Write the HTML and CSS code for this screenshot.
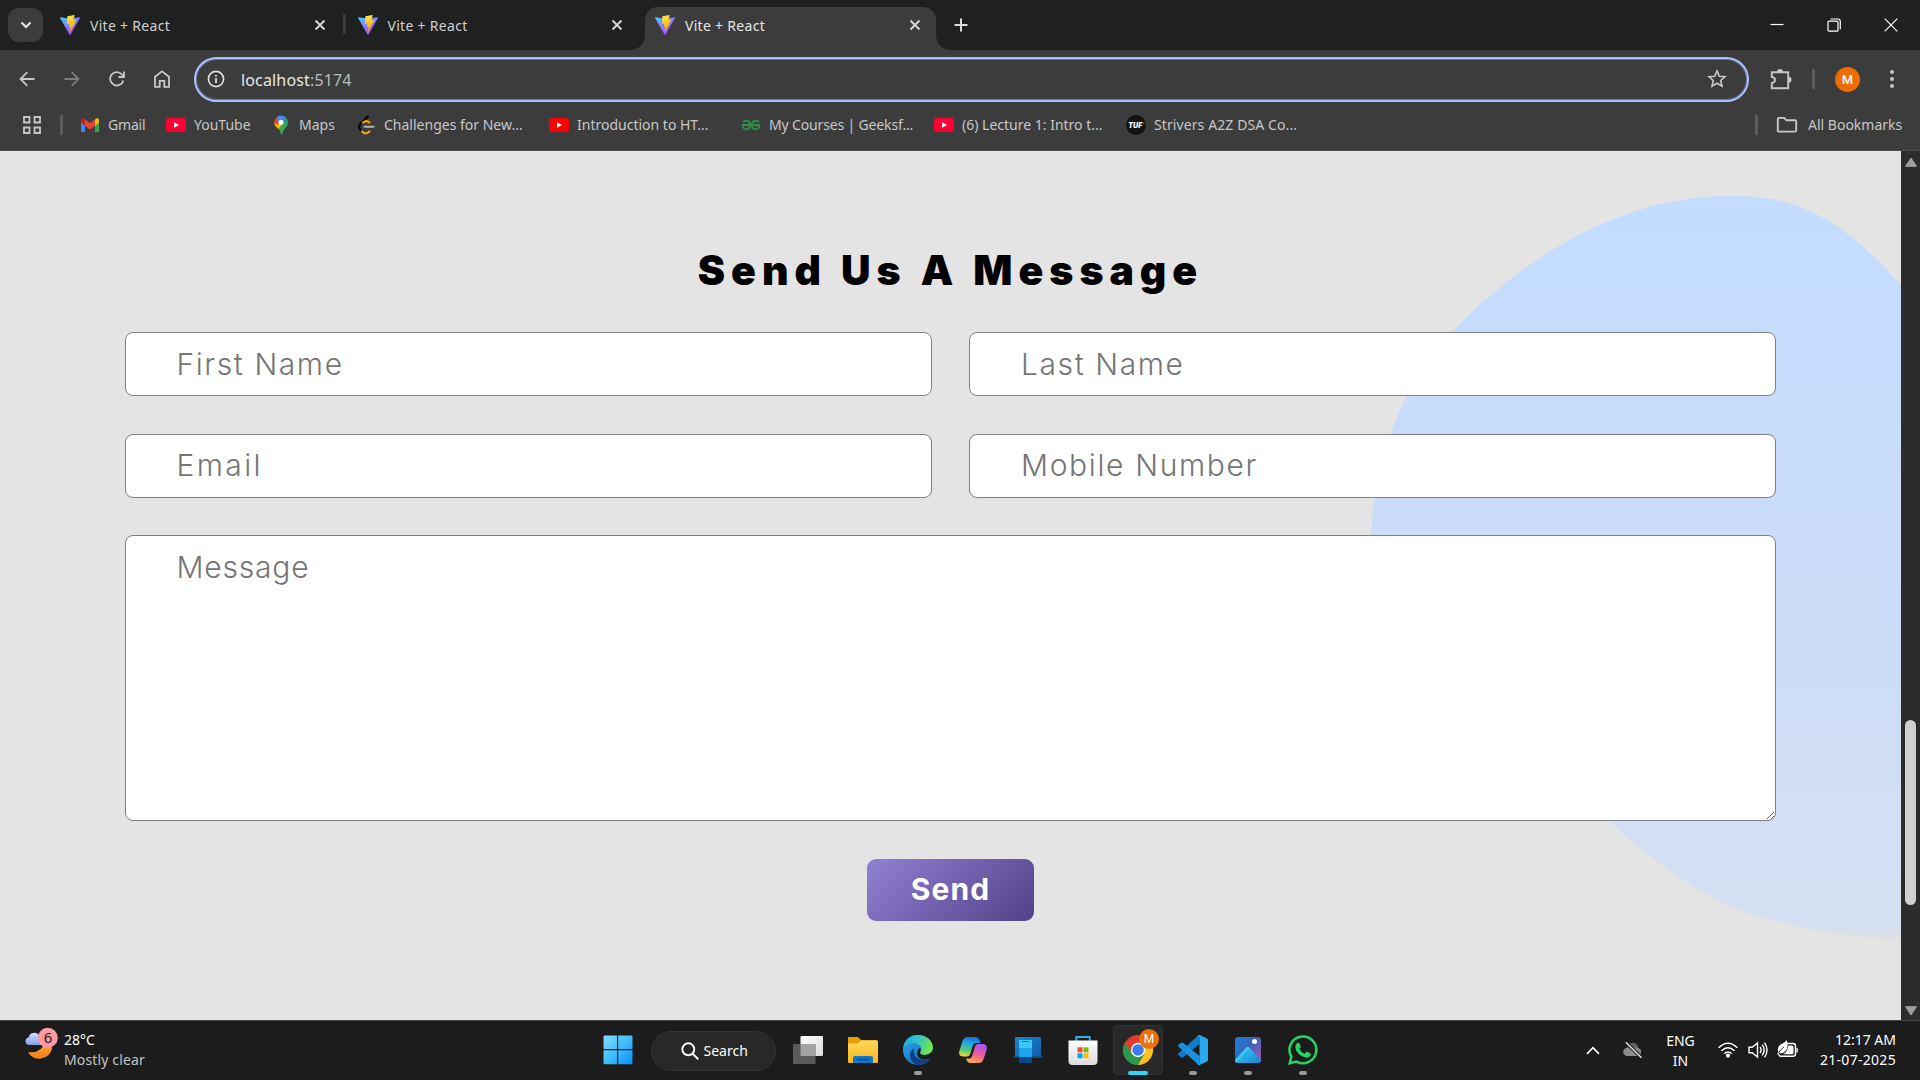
FILE: index.html
```html
<!DOCTYPE html>
<html lang="en">
<head>
<meta charset="utf-8">
<title>Vite + React</title>
<link rel="stylesheet" href="styles.css">
</head>
<body>
<svg class="defs" width="0" height="0" aria-hidden="true">
  <defs>
    <linearGradient id="va" x1="0" y1="0" x2=".7" y2="1"><stop offset="0" stop-color="#41d1ff"/><stop offset="1" stop-color="#bd34fe"/></linearGradient>
    <linearGradient id="vb" x1=".4" y1="0" x2=".6" y2="1"><stop offset="0" stop-color="#ffea83"/><stop offset=".1" stop-color="#ffdd35"/><stop offset="1" stop-color="#ffa800"/></linearGradient>
    <symbol id="vite" viewBox="0 0 256 257">
      <path fill="url(#va)" d="M255.2 37.9 134 254.600a6.600 6.600 0 0 1-11.500 0L.9 37.900a6.600 6.600 0 0 1 6.900-9.700l120 21.400a6.600 6.600 0 0 0 2.300 0l118.200-21.400a6.600 6.600 0 0 1 6.900 9.700z"/>
      <path fill="url(#vb)" d="M185.400 0 96.400 17.500a3.300 3.300 0 0 0-2.600 3l-5.500 92.500a3.300 3.300 0 0 0 4 3.400l24.800-5.700a3.300 3.300 0 0 1 4 3.900l-7.400 36a3.300 3.300 0 0 0 4.200 3.800l15.300-4.600a3.300 3.300 0 0 1 4.200 3.800l-11.700 56.600c-.7 3.500 4 5.400 6 2.400l1.300-2 72.500-144.600c1.200-2.400-.9-5.200-3.600-4.700l-25.500 5a3.300 3.300 0 0 1-3.800-4.200l16.700-57.700a3.300 3.300 0 0 0-3.800-4.200z"/>
    </symbol>
    <symbol id="yt" viewBox="0 0 20 14"><rect width="20" height="14" rx="3.200"/><path fill="#fff" d="M8 4.200v5.600L13 7z"/></symbol>
    <symbol id="close" viewBox="0 0 12 12"><path d="M1.500 1.500l9 9m0-9l-9 9" fill="none" stroke="currentColor" stroke-width="1.900"/></symbol>
  </defs>
</svg>

<header class="browser">
  <div class="tabstrip">
    <div class="tab-search"><svg width="12" height="8" viewBox="0 0 12 8"><path d="M1.500 1.500 6 6l4.500-4.500" fill="none" stroke="#e6e6e6" stroke-width="2.200"/></svg></div>
    <div class="tab"><svg class="fav"><use href="#vite"/></svg><span>Vite + React</span><svg class="x"><use href="#close"/></svg></div>
    <div class="tab second"><svg class="fav"><use href="#vite"/></svg><span>Vite + React</span><svg class="x"><use href="#close"/></svg></div>
    <div class="tab active"><svg class="fav"><use href="#vite"/></svg><span>Vite + React</span><svg class="x"><use href="#close"/></svg></div>
    <svg class="plus" width="14" height="14" viewBox="0 0 14 14"><path d="M7 .5v13M.5 7h13" stroke="#dcdcdc" stroke-width="2"/></svg>
    <div class="window-controls">
      <svg width="14" height="14"><path d="M.5 6.500h13" stroke="#fff" stroke-width="1.200"/></svg>
      <svg width="14" height="14" fill="none" stroke="#fff" stroke-width="1.200"><rect x="1" y="3.200" width="10" height="10" rx="1"/><path d="M3.500 1H11q2.300 0 2.300 2.300v8"/></svg>
      <svg width="14" height="14"><path d="M.7.700l12.600 12.600m0-12.600L.7 13.300" stroke="#fff" stroke-width="1.200"/></svg>
    </div>
  </div>

  <div class="toolbar">
    <div class="nav">
      <svg width="16" height="16" viewBox="0 0 16 16"><path d="M15.500 8H1.800M8.300 1.200 1.500 8l6.800 6.800" fill="none" stroke="#c7c7c7" stroke-width="1.800"/></svg>
      <svg width="16" height="16" viewBox="0 0 16 16"><path d="M.5 8h13.700M7.700 1.200 14.500 8l-6.800 6.800" fill="none" stroke="#7c7c7c" stroke-width="1.800"/></svg>
      <svg width="16" height="16" viewBox="0 0 16 16"><path d="M14.300 9.500A6.700 6.700 0 1 1 13 3.500L15 5.800M15 .5v5.500H9.400" fill="none" stroke="#c7c7c7" stroke-width="1.800"/></svg>
      <svg width="16" height="18" viewBox="0 0 16 18"><path d="M1 16.800V6.800L8 1.300l7 5.500v10h-4.700v-6H5.700v6z" fill="none" stroke="#c7c7c7" stroke-width="1.800"/></svg>
    </div>
    <div class="address">
      <svg width="18" height="18" viewBox="0 0 18 18"><circle cx="9" cy="9" r="7.600" fill="none" stroke="#dedede" stroke-width="1.600"/><path d="M9 8v5M9 5v1.800" stroke="#dedede" stroke-width="1.700"/></svg>
      <span class="url">localhost<i>:5174</i></span>
      <svg class="star" width="20" height="20" viewBox="0 0 20 20"><path d="M10 1.900l2.300 5.300 5.800.5-4.400 3.800 1.300 5.700-5-3-5 3 1.300-5.700L1.900 7.700l5.800-.5z" fill="none" stroke="#c7c7c7" stroke-width="1.600"/></svg>
    </div>
    <svg class="puzzle" width="22" height="22" viewBox="0 0 22 22"><path d="M18.200 4.200v16H1.800v-5.200q3.200-.3 3.200-3t-3.200-3V4.200z" fill="none" stroke="#c7c7c7" stroke-width="1.900"/><path d="M7 4a3 3 0 0 1 6 0zM18.500 8.700a3 3 0 0 1 0 6z" fill="#c7c7c7"/></svg>
    <i class="sep"></i>
    <div class="avatar">M</div>
    <svg class="dots" width="6" height="20"><circle cx="3" cy="3" r="2" fill="#c7c7c7"/><circle cx="3" cy="10" r="2" fill="#c7c7c7"/><circle cx="3" cy="17" r="2" fill="#c7c7c7"/></svg>
  </div>

  <div class="bookmarks">
    <svg class="apps" width="18" height="18" viewBox="0 0 18 18" fill="none" stroke="#c7c7c7" stroke-width="1.800"><path d="M1 1h5.500v5.500H1zM11.500 1H17v5.500h-5.500zM1 11.500h5.500V17H1zM11.500 11.500H17V17h-5.500z"/></svg>
    <i class="sep"></i>
    <div class="links">
      <a><svg width="20" height="20" viewBox="0 0 20 20"><path fill="#4285f4" d="M1 5v10.500Q1 17 2.500 17H5V8z"/><path fill="#34a853" d="M19 5v10.500q0 1.500-1.500 1.500H15V8z"/><path fill="#fbbc04" d="M15 4.500 16 3.600q3-1.400 3 1.900v2.200l-4 3z"/><path fill="#c5221f" d="M5 4.500 4 3.600Q1 2.200 1 5.500v2.200l4 3z"/><path fill="#ea4335" d="M5 4.500l5 3.800 5-3.800v6.200l-5 3.800-5-3.800z"/></svg><span class="t-gmail">Gmail</span></a>
      <a><svg width="20" height="14" fill="#ff0033"><use href="#yt"/></svg><span>YouTube</span></a>
      <a><svg width="20" height="20" viewBox="0 0 20 20"><path fill="#34a853" d="M3.300 8A7 7 0 0 1 17 6.500c.6 4.500-2.700 6-4.500 9L11.300 19q-.8 1.200-1.400 0l-1-3C7 12.500 3.500 11 3.300 8z"/><path fill="#fbbc04" d="M3.300 8l2.500-2 5 4-3.500 4C5.500 12 3.500 10.500 3.300 8z"/><path fill="#ea4335" d="M4 5q1-2.500 3-3.700L9.500 5 7 10 3.300 8q0-1.600.7-3z"/><path fill="#4285f4" d="M6.500 1.600q5-2.500 8.700 1.400L9.500 9 7 5.500z"/><path fill="#1a73e8" d="M12 6l4.500-2.300Q18 7 16.500 10z" opacity=".4"/><circle cx="10" cy="7.300" r="2.500" fill="#fff"/></svg><span>Maps</span></a>
      <a><svg width="20" height="20" viewBox="0 0 20 20" fill="none" stroke-linecap="round" stroke-width="2.100"><path stroke="#000" d="M12 1.500 4.200 9.300Q1.800 12 4.200 14.600L6 16.700"/><path stroke="#ffa116" d="M7 7.500q3.500-2.800 6.500 0M6 16.500q4 4 7.500-.2"/><path stroke="#b3b3b3" d="M8.500 11.800h9"/></svg><span>Challenges for New...</span></a>
      <a><svg width="20" height="14" fill="#ff0000"><use href="#yt"/></svg><span>Introduction to HT...</span></a>
      <a><svg width="20" height="20" viewBox="0 0 20 20" fill="none" stroke="#2f8d46" stroke-width="1.900"><path d="M1 10h8.300M10.700 10H19M2 7q2-1.800 4.500-1 2.600 1 2.600 4t-2.300 4.100q-2.300.8-4-.7-1.300-1.200-1.200-3M18 7q-2-1.800-4.500-1-2.600 1-2.600 4t2.300 4.100q2.300.8 4-.7 1.300-1.200 1.200-3"/></svg><span class="t-gfg">My Courses | Geeksf...</span></a>
      <a><svg width="20" height="14" fill="#ff0033"><use href="#yt"/></svg><span>(6) Lecture 1: Intro t...</span></a>
      <a><svg width="20" height="20" viewBox="0 0 20 20"><circle cx="10" cy="10" r="10" fill="#121212"/><text x="2.300" y="12.600" class="tuf">TUF</text><circle cx="18" cy="8.500" r=".7" fill="#e0533a"/></svg><span class="t-tuf">Strivers A2Z DSA Co...</span></a>
    </div>
    <i class="sep right"></i>
    <svg class="folder" width="22" height="18" viewBox="0 0 22 18"><path d="M3 1.900h5.200l2.200 2.300H19q1.200 0 1.200 1.200v9q0 1.200-1.200 1.200H3q-1.200 0-1.200-1.200V3.100Q1.800 1.900 3 1.900z" fill="none" stroke="#c7c7c7" stroke-width="1.900"/></svg>
    <span class="all">All Bookmarks</span>
  </div>
</header>

<div class="viewport">
  <main class="page">
    <svg class="blob" width="541" height="780" viewBox="1360 180 541 780">
      <linearGradient id="bg" gradientUnits="userSpaceOnUse" x1="1640" y1="197" x2="1640" y2="942">
        <stop offset="0" stop-color="#c3dcff"/><stop offset=".5" stop-color="#cbdcf9"/><stop offset=".978" stop-color="#d5e0f2"/><stop offset=".988" stop-color="#dbdfe6"/><stop offset="1" stop-color="#e3e3e3"/>
      </linearGradient>
      <path fill="url(#bg)" d="M1728 196C1745 196 1760 197 1774 199.500C1822 209 1862 240 1902 286.500V943C1860 939 1810 930 1760 917C1705 901 1655 863 1609 821C1450 720 1371 640 1371 545C1371 480 1392 395 1452 331.700C1540 240 1640 196 1728 196z"/>
    </svg>
    <form class="contact">
      <h1>Send Us A Message</h1>
      <div class="fields">
        <input class="i-first" placeholder="First Name">
        <input class="i-last" placeholder="Last Name">
        <input class="i-email" placeholder="Email">
        <input class="i-mobile" placeholder="Mobile Number">
        <textarea placeholder="Message"></textarea>
      </div>
      <button type="button">Send</button>
    </form>
  </main>
  <div class="scrollbar">
    <svg width="14" height="10"><path d="M7 1 12.500 9.300H1.500z" fill="#9f9f9f" stroke="#9f9f9f" stroke-linejoin="round"/></svg>
    <div class="thumb"></div>
    <svg width="14" height="10"><path d="M7 9 12.500.700H1.500z" fill="#9f9f9f" stroke="#9f9f9f" stroke-linejoin="round"/></svg>
  </div>
</div>

<footer class="taskbar">
  <div class="weather">
    <svg width="36" height="36" viewBox="0 0 36 36">
      <linearGradient id="mo" x1="0" y1="0" x2="0" y2="1"><stop offset="0" stop-color="#fbb03b"/><stop offset="1" stop-color="#f07d1e"/></linearGradient>
      <linearGradient id="cl" x1="0" y1="0" x2="0" y2="1"><stop offset="0" stop-color="#cfe0ff"/><stop offset="1" stop-color="#7f9fe6"/></linearGradient>
      <path fill="url(#mo)" d="M5 25q14 2 17-11 6 1 7 7.500A13 13 0 0 1 5 25z"/>
      <path fill="url(#cl)" d="M6 18a3.800 3.800 0 0 1-.5-7.500A6 6 0 0 1 16 8q6 2 3.500 10z"/>
      <circle cx="24.800" cy="10.800" r="10" fill="#ff99a4"/><text x="20.700" y="16" class="badge">6</text>
    </svg>
    <div><b>28°C</b><span>Mostly clear</span></div>
  </div>

  <div class="apps-row">
    <div class="cell start"><svg width="30" height="30"><linearGradient id="w" gradientUnits="userSpaceOnUse" x1="0" y1="0" x2="29" y2="29"><stop offset="0" stop-color="#85deff"/><stop offset=".5" stop-color="#3fc0fb"/><stop offset="1" stop-color="#0a8fff"/></linearGradient><path fill="url(#w)" d="M1.500.500H14V14H.5V1.500zM15.200.500h13.300l1 1V14H15.200zM.5 15.200H14v14H1.500l-1-1zM15.200 15.200h14.300v13l-1 1H15.200z"/></svg></div>
    <div class="search"><svg width="18" height="18" viewBox="0 0 18 18"><circle cx="7.300" cy="7.300" r="6" fill="none" stroke="#fff" stroke-width="1.900"/><path d="M11.700 11.700l5.500 5.500" stroke="#fff" stroke-width="2"/></svg><span>Search</span></div>
    <div class="cell"><svg width="30" height="30"><linearGradient id="tv" x1="0" y1="0" x2="1" y2="1"><stop offset="0" stop-color="#fff"/><stop offset="1" stop-color="#dcdcdc"/></linearGradient><rect x="7.500" y="1" width="22.500" height="20" rx="1.200" fill="url(#tv)"/><rect x="0" y="9" width="22.500" height="20" rx="1.200" fill="#5a5a5a"/><rect x="7.500" y="9" width="15" height="12" fill="#a3a3a3"/></svg></div>
    <div class="cell"><svg width="30" height="30"><linearGradient id="fo" x1="0" y1="0" x2="0" y2="1"><stop offset="0" stop-color="#ffd75e"/><stop offset="1" stop-color="#f9b61b"/></linearGradient><path fill="#e2a00a" d="M0 3q0-1 1-1h9l3 3H29v5H0z"/><path fill="url(#fo)" d="M0 8.500h10l3-3h16q1 0 1 1V27q0 1-1 1H1q-1 0-1-1z"/><path fill="#1376c9" d="M5 28v-5q0-2 2-2h16q2 0 2 2v5z"/><path d="M8.500 24.500h13" stroke="#0a4a8a" stroke-width="1.500"/></svg></div>
    <div class="cell running"><svg width="30" height="30" viewBox="0 0 30 30"><linearGradient id="e1" x1="0" y1="0" x2="1" y2=".3"><stop offset="0" stop-color="#1ba4e0"/><stop offset=".5" stop-color="#2fc3d0"/><stop offset="1" stop-color="#6fe64a"/></linearGradient><linearGradient id="e2" x1="0" y1="0" x2="1" y2="1"><stop offset="0" stop-color="#2fa8ea"/><stop offset="1" stop-color="#0a62b5"/></linearGradient><circle cx="15" cy="15" r="15" fill="url(#e2)"/><path fill="#123f86" d="M11 13q-2 11 10 12 4 0 7-2-4 7-12 7Q6 28 7 19q1-4 4-6z"/><path fill="url(#e1)" d="M0 13.500Q2 0 15 0q13 .5 15 12 0 7.500-8 8-5 0-5-2.200 3-3.300 0-7Q14.500 8 10 8 4 8.500 0 13.500z"/><path fill="#1c1c1c" d="M17 17.800q0 2.200 5 2.200 5-.3 8-5v8l-3 .5q-9 2.500-12-2-2-3.500.5-7.500l1.500-1.200q1.500 2 0 5z"/></svg></div>
    <div class="cell"><svg width="30" height="30" viewBox="0 0 30 30"><linearGradient id="c1" x1=".5" y1="0" x2=".3" y2="1"><stop offset="0" stop-color="#1b6fe0"/><stop offset=".4" stop-color="#22b4d8"/><stop offset=".7" stop-color="#5cc872"/><stop offset="1" stop-color="#f5dc32"/></linearGradient><linearGradient id="c2" x1=".6" y1="0" x2=".3" y2="1"><stop offset="0" stop-color="#a955ef"/><stop offset=".5" stop-color="#f0589b"/><stop offset="1" stop-color="#ffa94a"/></linearGradient><path fill="url(#c2)" d="M20 9h5q5 .5 3.600 6l-3 9q-1.300 4-5 4H12q-3-.5-4-4.500h3.500q2-.5 2.700-3l2.500-8Q17.500 9 20 9z"/><path fill="url(#c1)" d="M10 2h8q3.500.5 4.500 6H18q-2.500 0-3.300 3l-2.300 7.500q-1 3-3.400 3H5q-5-.5-3.700-5.500l3-9.500Q5.700 2 10 2z"/></svg></div>
    <div class="cell"><svg width="30" height="30"><linearGradient id="ph" x1="0" y1="0" x2="1" y2="1"><stop offset="0" stop-color="#1787d0"/><stop offset="1" stop-color="#0f5ea6"/></linearGradient><rect x="2" y="2" width="26" height="19" rx="1" fill="url(#ph)"/><path fill="#0d4f8b" d="M0 21h30l-1.500 2h-27z"/><path fill="#3fc6f5" d="M6 5h13v8H6z"/><path fill="#1ea4e8" d="M6 13h13v9H6z"/><path fill="#0b4a86" d="M6 22h13v6H6z"/><path d="M9.500 6.500h6" stroke="#0f6db0"/></svg></div>
    <div class="cell"><svg width="30" height="30"><linearGradient id="st" x1="0" y1="0" x2="0" y2="1"><stop offset="0" stop-color="#fff"/><stop offset="1" stop-color="#dcdcdc"/></linearGradient><path d="M8.300 6V2h13.400v4" fill="none" stroke="#2bb0ee" stroke-width="1.900"/><path fill="url(#st)" d="M.5 5.500h29V26q0 4-4 4h-21q-4 0-4-4z"/><path fill="#f25022" d="M9.500 12.300h5v5h-5z"/><path fill="#7fba00" d="M15.500 12.300h5v5h-5z"/><path fill="#00a4ef" d="M9.500 18.300h5v5h-5z"/><path fill="#ffb900" d="M15.500 18.300h5v5h-5z"/></svg></div>
    <div class="cell running current"><svg width="30" height="30" viewBox="0 0 30 30"><circle cx="15" cy="15" r="15" fill="#e33b2e"/><path fill="#2a9a48" d="M2 7.500 8.900 19 15 22.500 21 19 15.500 30A15 15 0 0 1 2 7.500z"/><path fill="#fcc31e" d="M15 8h13.300A15 15 0 0 1 15 30l6.500-11z"/><circle cx="15" cy="15" r="7.200" fill="#fff"/><circle cx="15" cy="15" r="5.800" fill="#3b7ded"/></svg><em>M</em></div>
    <div class="cell running"><svg width="30" height="30" viewBox="0 0 30 30"><path fill="#0f7cc9" d="M21.500 0v9L5 22.200q-1 .8-2 0L.6 20.300q-1-1 0-2L19.800.800z"/><path fill="#1a8fdc" d="M21.500 30v-9L5 7.800q-1-.8-2 0L.6 9.700q-1 1 0 2L19.800 29.200z"/><path fill="#29a9f2" d="M21.700 0 29 3.500q1 .6 1 1.700v19.600q0 1.100-1 1.700L21.700 30q-1.500.3-2.300-.8 2.100.6 2.100-1.700v-25q0-2.300-2.100-1.700.8-1.100 2.300-.8z"/></svg></div>
    <div class="cell running"><svg width="26" height="26"><linearGradient id="p1" x1="0" y1="0" x2="1" y2=".7"><stop offset="0" stop-color="#1583da"/><stop offset=".55" stop-color="#3c61b8"/><stop offset="1" stop-color="#8c5cae"/></linearGradient><linearGradient id="p2" x1="0" y1="0" x2="1" y2="1"><stop offset="0" stop-color="#38d4f6"/><stop offset="1" stop-color="#1683d5"/></linearGradient><clipPath id="pc"><rect width="26" height="26" rx="3"/></clipPath><g clip-path="url(#pc)"><path fill="url(#p1)" d="M0 0h26v26H0z"/><path fill="url(#p2)" d="M0 23 11.500 10.500q1.500-1.500 3 0L26 23v3H0z"/><path fill="#46dcf9" d="M0 23 11.500 10.500q1.500-1.500 3 0L1 26H0z" opacity=".6"/></g><circle cx="19.500" cy="4.500" r="2.500" fill="#fff"/></svg></div>
    <div class="cell running"><svg width="30" height="30" viewBox="0 0 30 30"><path d="M1.700 28.300 3.400 21.700A13.400 13.400 0 1 1 8.500 26.600z" fill="#1c1c1c" stroke="#25d366" stroke-width="2.500"/><path fill="#25d366" d="M10 7.800q1-.3 1.500.8l1.200 2.800q.2.800-.4 1.400l-1 1.200q1.700 3.300 5.300 4.800l1.500-1.700q.6-.6 1.300-.3l2.800 1.400q.8.400.6 1.200-.8 3.200-4.300 3.300Q13.500 22 10.200 18.300 7 14.800 7.300 11.500 7.800 8.300 10 7.800z"/></svg></div>
  </div>

  <div class="tray">
    <svg width="14" height="9"><path d="M1 7.800 7 1.700l6 6.100" fill="none" stroke="#fff" stroke-width="1.700"/></svg>
    <svg class="cloud" width="20" height="18" viewBox="0 0 20 18"><path fill="#5f5f5f" d="M4 6a6 6 0 0 1 11-1l1 4-12 1z"/><path fill="#8b8b8b" d="M4 15a4 4 0 0 1 .8-8.300L9 8q3-2.500 6-1a4.200 4.200 0 0 1 .5 8z"/><path d="M3 1.500l15.500 15" stroke="#1c1c1c" stroke-width="3.500"/><path d="M2.800 1.300l15.700 15.400" stroke="#e8e8e8" stroke-width="1.500"/></svg>
    <div class="lang"><span>ENG</span><span>IN</span></div>
    <svg class="wifi" width="20" height="16" viewBox="0 0 20 16" fill="none" stroke="#fff" stroke-width="1.500"><path d="M.6 5.800q9.400-9 18.800 0M3.500 8.800q6.500-6 13 0M6.400 11.600q3.600-3.200 7.200 0"/><circle cx="10" cy="13.600" r="1.300" fill="#fff"/></svg>
    <svg class="vol" width="20" height="18" viewBox="0 0 20 18" fill="none" stroke="#fff" stroke-width="1.400"><path d="M1 6.200v5.600h3.200L9.500 16V2L4.200 6.200zM12 6q2.200 3 0 6M14.200 3.700q4 5.300 0 10.600M16.500 1.600q5 7.400 0 14.800"/></svg>
    <svg class="bat" width="21" height="19" viewBox="0 0 21 19"><path d="M10 4.500h6q2.500 0 2.500 2.500v8q0 2.200-2.500 2.200H4q-2.200 0-2.200-2" fill="none" stroke="#fff" stroke-width="1.400"/><path fill="#fff" d="M19.500 8.500l1.300 1v3.500l-1.300 1zM11.300 6.500H15q1.500 0 1.500 1.500v6q0 1.300-1.500 1.300H6q5-3 5.300-8.800zM9.500 1q3.300 9-3 12.500-1.500 1-4 .5L.8 15.500 0 14.700l1.300-1.500Q-.7 7 6 4.200 8.300 3.300 9.500 1z"/><path d="M1.500 14Q3 10.500 7 8" stroke="#1c1c1c" stroke-width=".9" fill="none"/></svg>
    <div class="clock"><span>12:17 AM</span><span class="date">21-07-2025</span></div>
  </div>
</footer>
</body>
</html>
```
FILE: styles.css
```css
* { box-sizing: border-box; }
body {
  margin: 0;
  width: 1920px;
  height: 1080px;
  overflow: hidden;
  display: flex;
  flex-direction: column;
  font: 14px/20px "Noto Sans", "Open Sans", sans-serif;
  color: #c7c7c7;
  background: #e4e4e4;
}
svg { display: block; flex: none; }
.defs { position: absolute; }
i { font-style: normal; }

/* Browser chrome */
.browser { height: 151px; background: #3c3c3c; border-bottom: 1px solid #4c4c4c; }
.tabstrip {
  height: 50px;
  display: flex;
  align-items: center;
  padding-left: 8px;
  background: #1f2120;
}
.tab-search {
  width: 35px;
  height: 34px;
  margin-right: 7px;
  border-radius: 11px;
  background: #3c3c3c;
  display: flex;
  align-items: center;
  justify-content: center;
}
.tab {
  width: 297.5px;
  height: 43px;
  align-self: flex-end;
  display: flex;
  align-items: center;
  padding: 0 22px 7px 10px;
}
.tab span { flex: 1; margin-left: 10px; padding-top: 1px; letter-spacing: .3px; color: #cfcfcf; }
.fav { width: 20px; height: 20px; }
.x { width: 12px; height: 12px; color: #d6d6d6; }
.second { position: relative; }
.second::before {
  content: "";
  position: absolute;
  left: -5px;
  top: 7px;
  width: 3px;
  height: 20px;
  border-radius: 1px;
  background: #3c3c3c;
}
.active {
  position: relative;
  width: 291px;
  padding-right: 15px;
  border-radius: 13px 13px 0 0;
  background: #3c3c3c;
}
.active span { color: #e6e6e6; }
.active::before, .active::after {
  content: "";
  position: absolute;
  bottom: 0;
  width: 14px;
  height: 14px;
}
.active::before { left: -14px; background: radial-gradient(circle at 0 0, transparent 13.5px, #3c3c3c 14px); }
.active::after { right: -14px; background: radial-gradient(circle at 100% 0, transparent 13.5px, #3c3c3c 14px); }
.plus { margin-left: 18px; }
.window-controls { margin-left: auto; margin-right: 22px; display: flex; gap: 43px; }

.toolbar { height: 58px; display: flex; align-items: center; padding-left: 19px; }
.nav { width: 175px; display: flex; gap: 29px; align-items: center; }
.address {
  width: 1555px;
  height: 45px;
  border: 2px solid #a8c3fa;
  border-radius: 23px;
  box-shadow: inset 0 0 0 1px #6b7795;
  display: flex;
  align-items: center;
  padding: 0 20px 0 11px;
}
.url { flex: 1; margin-left: 16px; padding-top: 1px; font-size: 16px; letter-spacing: .15px; color: #e8e8e8; }
.url i { color: #bdbdbd; }
.puzzle { margin-left: 21px; }
.sep { flex: none; width: 3px; height: 20px; border-radius: 1px; background: #5c5c5c; }
.toolbar .sep { margin-left: 20px; }
.avatar {
  width: 25px;
  height: 25px;
  margin-left: 20px;
  border-radius: 50%;
  background: #ef6c00;
  color: #fff;
  font: 500 13px/25px Roboto, sans-serif;
  text-align: center;
}
.dots { margin-left: 29px; }

.bookmarks { height: 34px; display: flex; align-items: center; padding-left: 23px; }
.apps + .sep { margin-left: 19px; }
.links {
  margin-left: 17px;
  display: grid;
  grid-template-columns: 86px 105px 85px 193px 192px 193px 192px 170px;
}
.links a { display: flex; align-items: center; gap: 8px; white-space: nowrap; }
.t-gmail { letter-spacing: -.2px; }
.t-gfg { letter-spacing: -.15px; }
.t-tuf { letter-spacing: .1px; }
.tuf { font: italic 900 7px "Inter", sans-serif; fill: #fff; }
.sep.right { margin-left: auto; }
.folder { margin-left: 18px; }
.all { width: 112px; margin-left: 10px; }

/* Contact page */
.viewport { height: 869px; display: flex; }
.page { position: relative; width: 1901px; height: 869px; overflow: hidden; background: #e4e4e4; }
.blob { position: absolute; left: 1360px; top: 29px; }
.contact { position: relative; padding: 94px 125px 0; text-align: center; }
h1 {
  margin: 0 0 37px;
  font: 900 41px/50px Inter, sans-serif;
  letter-spacing: 5.95px;
  color: #000;
}
.fields { display: grid; grid-template-columns: 807px 807px; gap: 37.5px 37px; }
input, textarea {
  width: 100%;
  height: 64px;
  margin: 0;
  padding: 0 50px 0 50.5px;
  border: 1px solid #808080;
  border-radius: 8px;
  outline: 0;
  background: #fff;
  font: 300 30px/36px Inter, sans-serif;
  letter-spacing: 1.6px;
}
::placeholder { color: #757575; }
.i-last { padding-left: 51px; }
.i-email { padding-bottom: 1px; letter-spacing: 2.4px; }
.i-mobile { padding: 0 50px 1px 51px; letter-spacing: 1.65px; }
textarea { display: block; grid-column: span 2; height: 286px; padding-top: 13px; letter-spacing: .8px; }
button {
  width: 167px;
  height: 62px;
  margin-top: 38px;
  padding: 0 0 2px;
  border: 0;
  border-radius: 9px;
  background: linear-gradient(135deg, #9181d3, #534189);
  color: #fff;
  font: 700 30px/60px Inter, sans-serif;
  letter-spacing: 1.1px;
}
.scrollbar {
  width: 19px;
  padding: 6px 2px 4px;
  display: flex;
  flex-direction: column;
  align-items: center;
  background: #2c2c2c;
}
.thumb { width: 11px; height: 185px; margin: 553px 0 auto; border-radius: 6px; background: #d0d0d0; }

/* Taskbar */
.taskbar {
  height: 60px;
  border-top: 1px solid #444;
  background: #1c1c1c;
  display: flex;
  color: #fff;
}
.weather { width: 590.5px; display: flex; padding: 6px 0 0 23px; }
.weather svg { overflow: visible; }
.weather div { margin: 3px 0 0 5px; }
.weather b, .weather span, .lang span, .clock span { display: block; font-weight: 400; }
.weather span { color: #c4c4c4; letter-spacing: .15px; }
.badge { font: 15px "Noto Sans", sans-serif; fill: #1c1c1c; }
.apps-row { width: 740px; display: flex; align-items: center; }
.cell { position: relative; width: 55px; height: 59px; padding-bottom: 1px; display: flex; align-items: center; justify-content: center; }
.start { margin-right: 5px; }
.search {
  width: 125px;
  height: 40px;
  margin-right: 4.5px;
  padding-left: 29px;
  border: 1px solid #323232;
  border-radius: 20px;
  background: #282828;
  display: flex;
  align-items: center;
  gap: 5px;
}
.running::after {
  content: "";
  position: absolute;
  left: 24px;
  bottom: 5px;
  width: 8px;
  height: 4px;
  border-radius: 2px;
  background: #9a9a9a;
}
.current::before {
  content: "";
  position: absolute;
  inset: 4px 2px 5px 3px;
  border: 1px solid #333;
  border-radius: 5px;
  background: #282828;
}
.current svg { position: relative; }
.current::after { left: 18px; width: 20px; background: #2fd6f7; }
.current em {
  position: absolute;
  left: 29px;
  top: 8px;
  width: 20px;
  height: 20px;
  border-radius: 50%;
  background: #e8710a;
  font: 12px/20px Roboto, sans-serif;
  text-align: center;
}
.tray { flex: 1; display: flex; align-items: center; padding: 0 24px 1px 255px; }
.cloud { margin-left: 23px; }
.lang { margin: 2px 0 0 22px; width: 32px; text-align: center; }
.wifi { margin-left: 21px; }
.vol { margin-left: 10px; }
.bat { margin: -3px 0 0 9px; }
.clock { margin-left: auto; text-align: right; }
.date { letter-spacing: .3px; }
```
